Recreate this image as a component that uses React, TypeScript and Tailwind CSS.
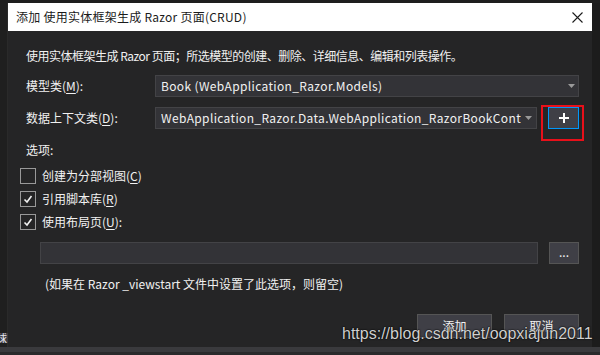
import React from "react";

const M = ({ c }: { c: string }) => <span className="underline underline-offset-[2px]">{c}</span>;

const Arrow = () => (
  <svg width="7" height="4" viewBox="0 0 7 4" className="shrink-0">
    <path d="M0 0 H7 L3.5 4 Z" fill="#9a9a9a" />
  </svg>
);

const Check = () => (
  <svg width="14" height="14" viewBox="0 0 14 14">
    <path d="M3.5 7.5 L6 10 L10.5 4" fill="none" stroke="#f1f1f1" strokeWidth="1.6" />
  </svg>
);

type CheckRowProps = {
  checked: boolean;
  children: React.ReactNode;
};

const CheckRow = ({ checked, children }: CheckRowProps) => (
  <div className="flex items-center h-[16px]">
    <div className="w-[16px] h-[16px] border border-[#999999] flex items-center justify-center">
      {checked && <Check />}
    </div>
    <span className="ml-[6px] leading-[16px]">{children}</span>
  </div>
);

const App = () => {
  return (
    <div className="relative w-[600px] h-[355px] overflow-hidden bg-[#1e1e1e] flex flex-col text-[12px] font-[family-name:'Noto_Sans_CJK_SC',sans-serif]">
      <div className="flex h-[347px] pt-[3px]">
        <div className="w-[8px] bg-[#1f1f1f] border-r border-[#2a2a2a]" />
        <div className="w-[584px] flex flex-col bg-[#252526]">
          {/* title bar */}
          <div className="h-[28px] bg-white flex items-center justify-between pl-[8px] pr-[9px] text-[#1b1b1b]">
            <span className="leading-[16px] tracking-[0.25px]">添加 使用实体框架生成 Razor 页面(CRUD)</span>
            <svg width="11" height="11" viewBox="0 0 11 11">
              <path d="M0.5 0.5 L10.5 10.5 M10.5 0.5 L0.5 10.5" stroke="#1b1b1b" strokeWidth="1.1" />
            </svg>
          </div>

          {/* body */}
          <div className="flex flex-col pl-[18px] pr-[13px] pt-[17px] text-[#f1f1f1]">
            <div className="leading-[16px] h-[16px] tracking-[-0.5px] whitespace-nowrap">
              使用实体框架生成 Razor 页面；所选模型的创建、删除、详细信息、编辑和列表操作。
            </div>

            <div className="flex items-center mt-[11px] h-[22px]">
              <div className="w-[129px] shrink-0 leading-[16px]">
                模型类(<M c="M" />):
              </div>
              <div className="flex-1 min-w-0 h-[22px] bg-[#333337] border border-[#434346] flex items-center pl-[5px] pr-[3px]">
                <span className="flex-1 min-w-0 whitespace-nowrap overflow-hidden leading-[16px] tracking-[0.35px]">
                  Book (WebApplication_Razor.Models)
                </span>
                <Arrow />
              </div>
            </div>

            <div className="flex items-center mt-[10px] h-[22px]">
              <div className="w-[129px] shrink-0 leading-[16px]">
                数据上下文类(<M c="D" />):
              </div>
              <div className="flex-1 min-w-0 h-[22px] bg-[#333337] border border-[#434346] flex items-center pl-[5px] pr-[3px]">
                <span className="flex-1 min-w-0 whitespace-nowrap overflow-hidden leading-[16px] tracking-[0.35px]">
                  WebApplication_Razor.Data.WebApplication_RazorBookContext
                </span>
                <span className="ml-[4px] mr-[1px] shrink-0">
                  <Arrow />
                </span>
              </div>
              <div className="relative shrink-0 ml-[11px] w-[31px] h-[22px] bg-[#3f3f46] border border-[#0097fb] flex items-center justify-center">
                <svg width="10" height="10" viewBox="0 0 10 10">
                  <path d="M5 0 V10 M0 5 H10" stroke="#ffffff" strokeWidth="2" />
                </svg>
                <div className="absolute left-[-8px] top-[-3px] w-[43px] h-[36px] border-2 border-[#e8101a]" />
              </div>
            </div>

            <div className="mt-[13px] leading-[16px] h-[16px]">选项:</div>

            <div className="flex flex-col gap-[7px] mt-[10px] ml-[-6px]">
              <CheckRow checked={false}>
                创建为分部视图(<M c="C" />)
              </CheckRow>
              <CheckRow checked>
                引用脚本库(<M c="R" />)
              </CheckRow>
              <CheckRow checked>
                使用布局页(<M c="U" />):
              </CheckRow>
            </div>

            <div className="flex items-center mt-[12px] ml-[14px] h-[22px]">
              <div className="flex-1 h-[22px] bg-[#333337] border border-[#434346]" />
              <div className="ml-[11px] w-[30px] h-[22px] bg-[#3f3f46] border border-[#555555] flex items-center justify-center leading-[16px] pb-[3px]">
                ...
              </div>
            </div>

            <div className="mt-[12px] ml-[19px] leading-[16px] h-[16px]">
              (如果在 Razor _viewstart 文件中设置了此选项，则留空)
            </div>

            <div className="flex justify-end gap-[12px] mt-[22px]">
              <div className="w-[75px] h-[24px] bg-[#3f3f46] border border-[#555555] flex items-center justify-center leading-[16px]">
                添加
              </div>
              <div className="w-[75px] h-[24px] bg-[#3f3f46] border border-[#555555] flex items-center justify-center leading-[16px]">
                取消
              </div>
            </div>
          </div>
        </div>
        <div className="flex-1 bg-[#1c1c1c]" />
      </div>
      <div className="h-[5px] bg-[#3a3a3d]" />
      <div className="h-[3px] bg-[#2a2a2c]" />

      {/* clipped glyph at left edge */}
      <div className="absolute left-0 top-[333px] w-[8px] h-[10px] overflow-hidden bg-[#3a3a40] text-[11px] leading-[10px] text-[#e8e8f0]">
        <span className="block ml-[-4px]">球</span>
      </div>

      {/* watermark */}
      <div className="absolute left-[342px] top-[325px] text-[16px] leading-[18px] font-[family-name:'Liberation_Sans',sans-serif] text-[#cfcfcf] [text-shadow:0_0_1px_#000,0_0_2px_#000]">
        https://blog.csdn.net/oopxiajun2011
      </div>
    </div>
  );
};

export default App;
